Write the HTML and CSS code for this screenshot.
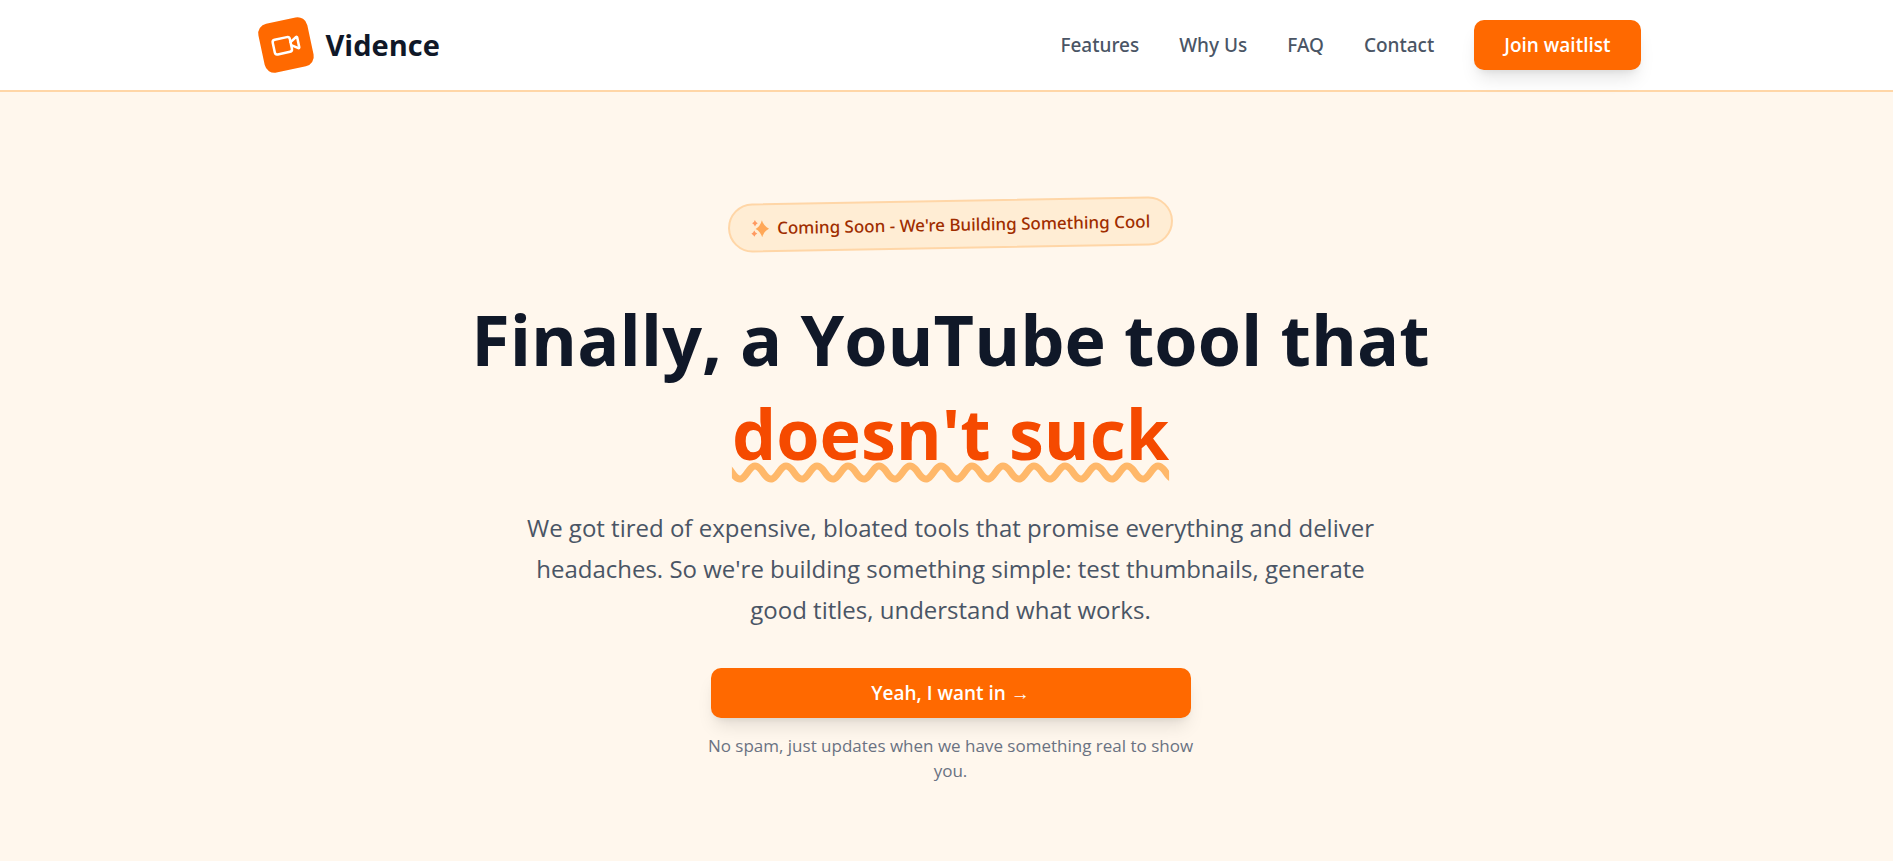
FILE: index.html
```html
<!DOCTYPE html>
<html lang="en">
<head>
<meta charset="utf-8">
<meta name="viewport" content="width=device-width, initial-scale=1">
<title>Vidence</title>
<link rel="stylesheet" href="styles.css">
</head>
<body>
<header class="site-header">
  <div class="header-inner">
    <a class="brand" href="#">
      <span class="brand-mark">
        <svg class="brand-icon" viewBox="0 0 24 24" fill="none" stroke="currentColor" stroke-width="2" stroke-linecap="round" stroke-linejoin="round" aria-hidden="true">
          <path d="m16 13 5.223 3.482a.5.5 0 0 0 .777-.416V7.87a.5.5 0 0 0-.752-.432L16 10.5"/>
          <rect x="2" y="6" width="14" height="12" rx="2"/>
        </svg>
      </span>
      <span class="brand-name">Vidence</span>
    </a>
    <nav class="nav" aria-label="Main">
      <a class="nav-link" href="#features">Features</a>
      <a class="nav-link" href="#why">Why Us</a>
      <a class="nav-link" href="#faq">FAQ</a>
      <a class="nav-link" href="#contact">Contact</a>
      <button class="button" type="button">Join waitlist</button>
    </nav>
  </div>
</header>
<main class="hero">
  <p class="badge">
    <svg class="sparkles" viewBox="0 0 18 18" aria-hidden="true">
      <path class="star-main" d="M11 1Q12.800 7.200 18 9.500Q12.800 11.800 11 18Q9.200 11.800 4.500 9.500Q9.200 7.200 11 1Z"/>
      <path class="star-small" d="M4 .5Q4.800 3 6.800 3.800Q4.800 4.600 4 7Q3.200 4.600 1.200 3.800Q3.200 3 4 .5ZM3.200 11Q4.100 13.300 6.200 14.200Q4.100 15.100 3.200 17.400Q2.300 15.100 .2 14.200Q2.300 13.300 3.200 11Z"/>
    </svg>
    <span>Coming Soon - We're Building Something Cool</span>
  </p>
  <h1 class="title">Finally, a YouTube tool that <span class="title-accent">doesn't suck</span></h1>
  <p class="lead">We got tired of expensive, bloated tools that promise everything and deliver headaches. So we're building something simple: test thumbnails, generate good titles, understand what works.</p>
  <div class="signup">
    <button class="button" type="button">Yeah, I want in →</button>
    <p class="note">No spam, just updates when we have something real to show you.</p>
  </div>
</main>
</body>
</html>
```
FILE: styles.css
```css
* { box-sizing: border-box; }

body {
  margin: 0;
  min-height: 100vh;
  background: #fff7ed;
  color: #101828;
  font-family: "Open Sans", "Noto Sans", sans-serif;
  font-size: 19px;
  line-height: 30px;
}

h1, p { margin: 0; }

.site-header {
  padding-left: 8px;
  background: #fff;
  border-bottom: 2px solid #ffd6a7;
}

.header-inner {
  display: flex;
  align-items: center;
  justify-content: space-between;
  max-width: 1440px;
  margin: 0 auto;
  padding: 20px 30px;
}

.brand {
  display: flex;
  align-items: center;
  gap: 15px;
  color: inherit;
  text-decoration: none;
}

.brand-mark {
  display: grid;
  place-items: center;
  width: 50px;
  height: 50px;
  border-radius: 10px;
  background: #ff6900;
  color: #fff;
  transform: rotate(-12deg);
}

.brand-icon { width: 30px; height: 30px; }

.brand-name {
  font-size: 29px;
  font-weight: 700;
  line-height: 32px;
}

.nav {
  display: flex;
  align-items: center;
  gap: 40px;
}

.nav-link {
  color: #4a5565;
  font-family: "Noto Sans", "Open Sans", sans-serif;
  font-weight: 500;
  text-decoration: none;
}

.button {
  padding: 10px 30px;
  border: 0;
  border-radius: 10px;
  background: #ff6900;
  box-shadow: 0 12px 18px -4px rgb(0 0 0 / 10%), 0 5px 8px -5px rgb(0 0 0 / 10%);
  color: #fff;
  font: inherit;
  font-weight: 600;
  cursor: pointer;
}

.hero {
  display: flex;
  flex-direction: column;
  align-items: center;
  padding: 108px 30px 80px 38px;
  text-align: center;
}

.badge {
  display: flex;
  align-items: center;
  gap: 8px;
  padding: 10px 21px;
  border: 2px solid #ffd6a7;
  border-radius: 25px;
  background: #ffedd4;
  color: #9f2d00;
  font-family: "Noto Sans", "Open Sans", sans-serif;
  font-size: 17px;
  font-weight: 500;
  line-height: 25px;
  transform: rotate(-1deg);
}

.sparkles { width: 18px; height: 18px; }
.star-main { fill: #ffa858; }
.star-small { fill: #ff9a62; }

.title {
  max-width: 1120px;
  margin-top: 43px;
  font-size: 70px;
  font-weight: 700;
  line-height: 94px;
}

.title-accent {
  display: block;
  width: fit-content;
  margin: 0 auto;
  color: #f54a00;
  text-decoration: underline wavy #ffb86a 7px;
  text-decoration-skip-ink: none;
}

.lead {
  max-width: 860px;
  margin-top: 27px;
  color: #4a5565;
  font-size: 24px;
  line-height: 41px;
}

.signup {
  display: grid;
  gap: 15px;
  width: 100%;
  max-width: 480px;
  margin-top: 38px;
}

.note {
  margin: 0 -10px;
  color: #6a7282;
  font-size: 17px;
  line-height: 25px;
}
```
